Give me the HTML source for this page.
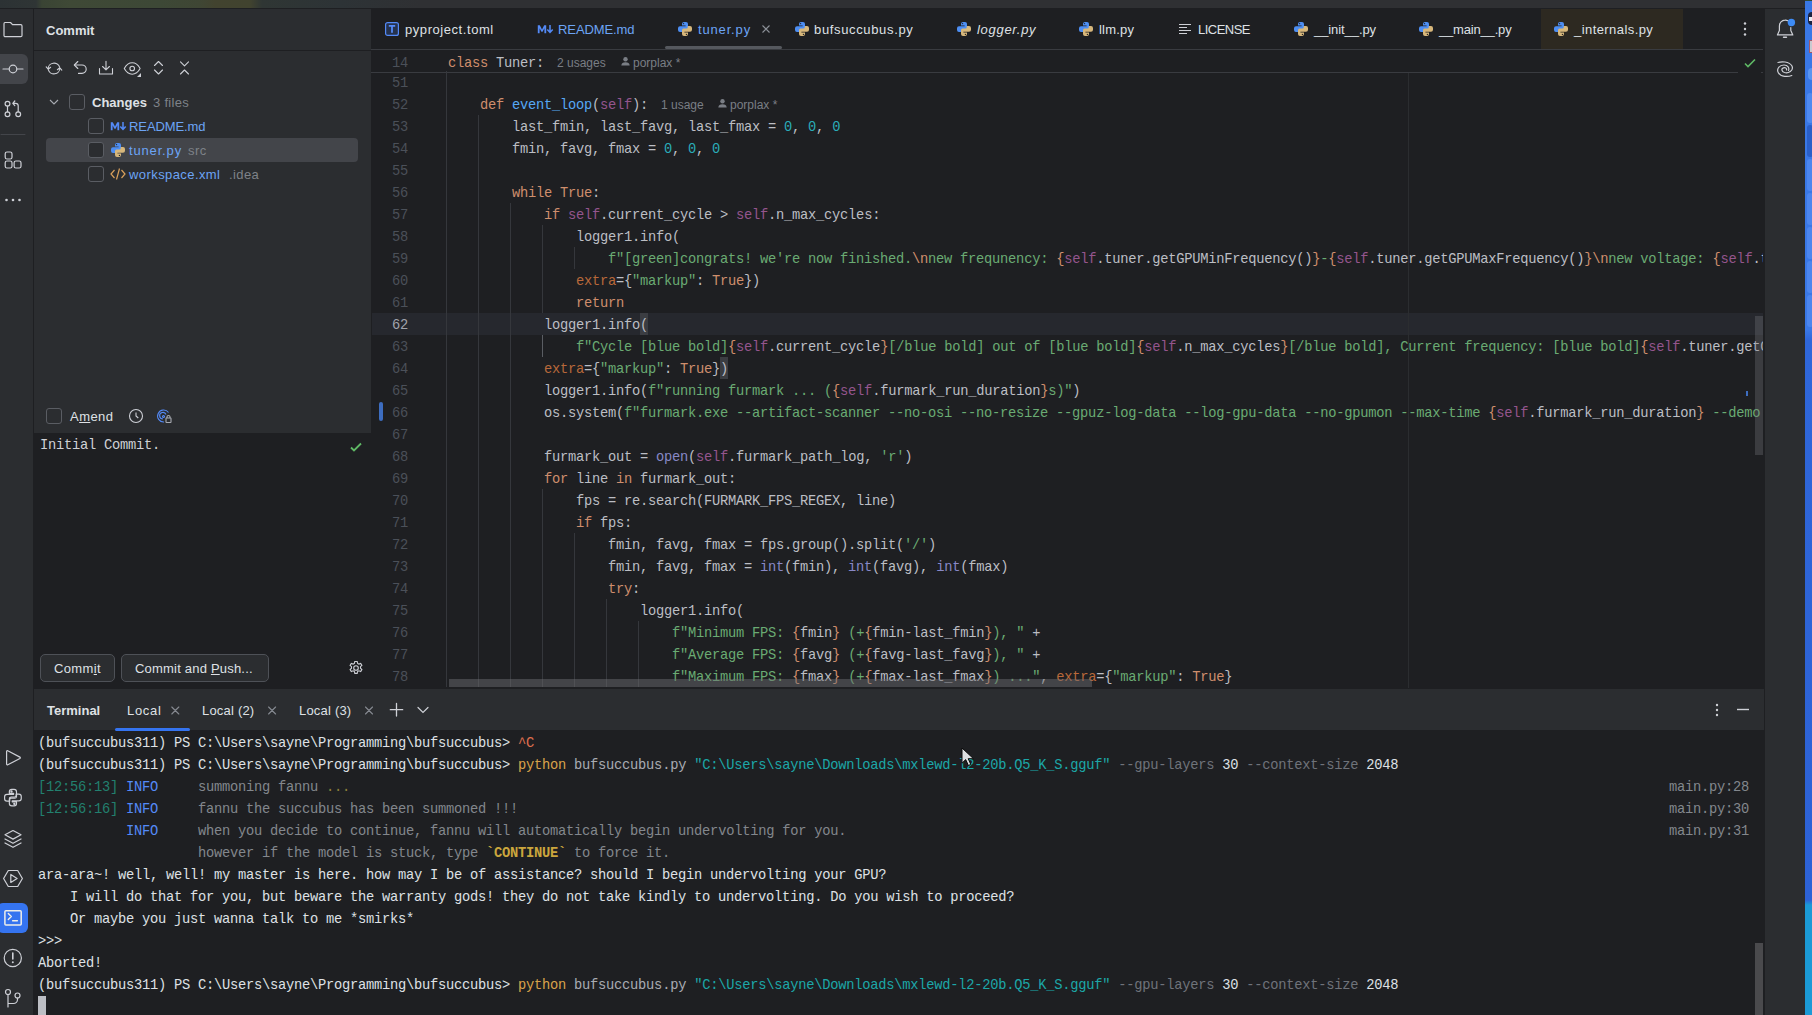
<!DOCTYPE html>
<html><head><meta charset="utf-8">
<style>
*{box-sizing:border-box}
html,body{margin:0;padding:0}
body{width:1812px;height:1015px;overflow:hidden;position:relative;background:#2B2D30;font-family:"Liberation Sans",sans-serif;color:#DFE1E5}
.a{position:absolute}
#topstrip{position:absolute;left:0;top:0;width:1812px;height:8px;background:linear-gradient(90deg,#2c3234 0px,#2f3535 36px,#3a4434 42px,#3f4936 70px,#3d4836 160px,#3f4634 200px,#42432f 215px,#41432f 250px,#2f3634 262px,#2d3336 340px,#2f3033 420px,#2f3033 1812px)}
#topline{position:absolute;left:0;top:8px;width:1805px;height:1px;background:#1E1F22}
#lbar{position:absolute;left:0;top:9px;width:33px;height:1006px;background:#2B2D30}
#lbord{position:absolute;left:33px;top:9px;width:1px;height:1006px;background:#1E1F22}
#commit{position:absolute;left:34px;top:9px;width:337px;height:679px;background:#2B2D30}
#cbord{position:absolute;left:371px;top:9px;width:1px;height:679px;background:#1E1F22}
#editor{position:absolute;left:371px;top:9px;width:1394px;height:679px;background:#1E1F22;overflow:hidden}
#rbord{position:absolute;left:1764px;top:9px;width:1px;height:1006px;background:#1E1F22}
#rbar{position:absolute;left:1765px;top:9px;width:40px;height:1006px;background:#2B2D30}
#desk{position:absolute;left:1805px;top:0;width:7px;height:1015px;background:linear-gradient(180deg,#3A78E6 0,#3A78E6 330px,#2F67DA 340px,#2D62D6 900px,#1B9AD6 905px,#1B9AD6 1015px)}
#term{position:absolute;left:34px;top:688px;width:1730px;height:327px;background:#1E1F22;overflow:hidden}
#thead{position:absolute;left:34px;top:689px;width:1730px;height:41px;background:#2B2D30}

.ui{position:absolute;font-size:13px;white-space:pre;line-height:18px}
.cl{position:absolute;left:77px;margin-top:2px;font-family:"Liberation Mono",monospace;font-size:13.75px;letter-spacing:-0.25px;line-height:22px;height:22px;white-space:pre;color:#BCBEC4}
.ln{position:absolute;left:0;width:37px;text-align:right;margin-top:2px;font-family:"Liberation Mono",monospace;font-size:13.75px;letter-spacing:-0.25px;line-height:22px;color:#4B5059}
.ln.cur{color:#A1A3AB}
.k{color:#CF8E6D}.s{color:#6AAB73}.n{color:#2AACB8}.sf{color:#94558D}.fn{color:#56A8F5}.bi{color:#8888C6}.kw{color:#B8683A}.br{color:#CF8E6D}.d{color:#BCBEC4}
.bm{background:#43454A}
.ig{position:absolute;width:1px;background:#35373C}
.ig.act{background:#5A5D63}
.tl{position:absolute;left:4px;margin-top:2px;font-family:"Liberation Mono",monospace;font-size:13.75px;letter-spacing:-0.25px;line-height:22px;white-space:pre;color:#DFE1E5}
.tw{color:#DFE1E5}.ty{color:#D9A34A}.tg2{color:#A8ABB2}.tc{color:#1CA7A8}.tp{color:#6F737A}.tr{color:#E0704F}.tt{color:#22806F}.tb{color:#548AF7}.tgr{color:#83878D}.tdy{color:#8F7F3A}.tyb{color:#CBA63D;font-weight:bold}
.tab{position:absolute;width:14px;height:14px;line-height:0}
.tabt{position:absolute;top:21px;font-size:13px;line-height:18px;white-space:pre;color:#DFE1E5}
.tabt.mod{color:#6CA4F5}
.tabx{position:absolute;top:19px;font-size:16px;line-height:18px;color:#8C9097}
.mdi{position:absolute;font-size:10px;font-weight:bold;color:#548AF7;line-height:14px;letter-spacing:-0.5px}
.cb{position:absolute;width:16px;height:16px;border:1px solid #5A5D63;border-radius:3px;background:#2B2D30}
.ico{position:absolute;line-height:0}
.hint{font-size:12px;color:#7A7E85}
</style></head>
<body>
<div id="topstrip"></div>
<div id="topline"></div>
<div id="lbar"></div>
<div id="lbord"></div>
<div id="commit"></div>
<div id="cbord"></div>
<div id="rbord"></div>
<div id="rbar"></div>
<div id="desk"></div>
<div class="a" style="left:1805px;top:0;width:7px;height:1px;background:#2D4A3A"></div>
<div class="a" style="left:1808px;top:12px;width:8px;height:13px;border-radius:6px;background:#1B2340"></div>
<div class="a" style="left:1809px;top:17px;width:4px;height:4px;background:#E8E8F0"></div>
<div class="a" style="left:1809px;top:40px;width:6px;height:13px;border:1px solid #A05A6A;background:#C8CAD0"></div>
<div class="a" style="left:1808px;top:68px;width:8px;height:12px;border-radius:6px;background:#5A95F0"></div>
<div class="a" style="left:1807px;top:93px;width:6px;height:30px;border-radius:3px;background:#4F8AF0"></div>
<div class="a" style="left:1807px;top:125px;width:6px;height:32px;border-radius:3px;background:#2A5FC8"></div>
<div class="a" style="left:1807px;top:159px;width:6px;height:32px;border-radius:3px;background:#4C86EE"></div>
<div class="a" style="left:1807px;top:193px;width:6px;height:32px;border-radius:3px;background:#4C86EE"></div>
<div class="a" style="left:1807px;top:227px;width:6px;height:32px;border-radius:3px;background:#4C86EE"></div>
<div class="a" style="left:1807px;top:261px;width:6px;height:32px;border-radius:3px;background:#4C86EE"></div>
<div class="a" style="left:1807px;top:295px;width:6px;height:32px;border-radius:3px;background:#4C86EE"></div>



<!-- commit panel -->
<div class="ui" style="left:46px;top:22px;font-weight:bold;color:#DFE1E5">Commit</div>
<div class="a" style="left:34px;top:50px;width:337px;height:1px;background:#1E1F22"></div>
<svg class="a" style="left:45px;top:60px" width="150" height="18" viewBox="0 0 150 18" fill="none" stroke="#CED0D6" stroke-width="1.1" stroke-linecap="round" stroke-linejoin="round">
  <path d="M3.2 8.8A5.8 5.5 0 0 1 14.6 7.2"/><path d="M1.2 6.8L3.2 9.2 5.6 7.3"/>
  <path d="M14.8 8.2A5.8 5.5 0 0 1 3.4 9.8"/><path d="M16.8 10.2L14.8 7.8 12.4 9.7"/>
  <path d="M29.5 5H37a4.2 4.2 0 0 1 0 8.4H33.5"/><path d="M32.8 1.5L29.3 5l3.5 3.5"/>
  <path d="M61 1.2v8.5M57.6 6.5L61 9.8l3.4-3.3"/><path d="M54.5 8.5V14H67.5V8.5"/>
  <path d="M79.3 8.5C81.5 4.5 84.3 2.8 87.2 2.8S92.9 4.5 95.1 8.5C92.9 12.5 90.1 14.2 87.2 14.2S81.5 12.5 79.3 8.5z"/><circle cx="87.2" cy="8.5" r="2.3"/>
  <path d="M96 13v4h-4z" fill="#CED0D6" stroke="none"/>
  <path d="M109.5 5.5l4-4 4 4M109.5 10l4 4 4-4"/>
  <path d="M135.5 1.8l4 4 4-4M135.5 14l4-4 4 4"/>
</svg>
<svg class="a" style="left:49px;top:98px" width="10" height="8"><path d="M1 2l4 4 4-4" fill="none" stroke="#A8ABB2" stroke-width="1.1"/></svg>
<div class="cb" style="left:69px;top:94px"></div>
<div class="ui" style="left:92px;top:94px;font-weight:bold">Changes</div>
<div class="ui" style="left:153px;top:94px;color:#7E8288;letter-spacing:0.3px">3 files</div>
<div class="cb" style="left:88px;top:118px"></div>
<div class="ico" style="left:110px;top:121px"><svg width="17" height="10" viewBox="0 0 17 10"><path d="M0.8 9.2V1.2h2l2.2 4.3 2.2-4.3h2v8H7.4V4.3L5.6 7.8H4.4L2.6 4.3v4.9z" fill="#548AF7"/><path d="M13 1v7.2M10.3 5.6l2.7 2.9 2.7-2.9" fill="none" stroke="#548AF7" stroke-width="1.5"/></svg></div>
<div class="ui" style="left:129px;top:118px;color:#6CA4F5;letter-spacing:-0.09px">README.md</div>
<div class="a" style="left:46px;top:138px;width:312px;height:24px;border-radius:4px;background:#43454A"></div>
<div class="cb" style="left:88px;top:142px;background:#2B2D30"></div>
<div class="ico" style="left:111px;top:143px"><svg width="14" height="14" viewBox="0 0 14 14"><path d="M4 2Q4 0 6 0H8Q10 0 10 2V6Q10 7.5 8.5 7.5H5.6Q4.3 7.5 4.3 8.8V10H2Q0 10 0 8V6.2Q0 4.2 2 4.2H7.6V3.5H4Z" fill="#4D8EF3"/><circle cx="5.6" cy="1.6" r="0.65" fill="#1E1F22"/><g transform="rotate(180 7 7)"><path d="M4 2Q4 0 6 0H8Q10 0 10 2V6Q10 7.5 8.5 7.5H5.6Q4.3 7.5 4.3 8.8V10H2Q0 10 0 8V6.2Q0 4.2 2 4.2H7.6V3.5H4Z" fill="#D7B77B"/><circle cx="5.6" cy="1.6" r="0.65" fill="#1E1F22"/></g></svg></div>
<div class="ui" style="left:129px;top:142px;color:#6CA4F5;letter-spacing:0.84px">tuner.py</div>
<div class="ui" style="left:188px;top:142px;color:#7E8288;letter-spacing:0.4px">src</div>
<div class="cb" style="left:88px;top:166px"></div>
<svg class="a" style="left:110px;top:167px" width="16" height="14" viewBox="0 0 16 14" fill="none" stroke="#D9A05B" stroke-width="1.2"><path d="M4.5 3L1 7l3.5 4M11.5 3L15 7l-3.5 4M9.5 1.5l-3 11"/></svg>
<div class="ui" style="left:129px;top:166px;color:#6CA4F5;letter-spacing:0.42px">workspace.xml</div>
<div class="ui" style="left:229px;top:166px;color:#7E8288;letter-spacing:0.4px">.idea</div>

<div class="cb" style="left:46px;top:408px"></div>
<div class="ui" style="left:70px;top:408px;letter-spacing:0.45px">A<u>m</u>end</div>
<svg class="a" style="left:128px;top:408px" width="16" height="16" viewBox="0 0 16 16" fill="none" stroke="#CED0D6" stroke-width="1.1"><circle cx="8" cy="8" r="6.5"/><path d="M8 4.5V8l2.3 2"/></svg>
<svg class="a" style="left:156px;top:408px" width="16" height="16" viewBox="0 0 16 16" fill="none" stroke="#548AF7" stroke-width="1.1"><path d="M12.5 4.5A6 6 0 1 0 8 14"/><path d="M10 6.5A3.3 3.3 0 1 0 7 11"/><circle cx="7.5" cy="8.5" r="1"/><rect x="10" y="10" width="5" height="4.5" rx="0.5" stroke="#A8ABB2" fill="#2B2D30"/><path d="M11 10V9a1.5 1.5 0 0 1 3 0v1" stroke="#A8ABB2"/></svg>
<div class="a" style="left:34px;top:433px;width:337px;height:255px;background:#1E1F22"></div>
<div class="ui" style="left:40px;top:437px;font-family:'Liberation Mono',monospace;font-size:13.75px;letter-spacing:-0.25px;color:#CFD1D5">Initial Commit.</div>
<svg class="a" style="left:349px;top:441px" width="14" height="12" viewBox="0 0 14 12"><path d="M2 6.5l3 3 7-7" fill="none" stroke="#5FB865" stroke-width="1.8"/></svg>
<div class="a" style="left:40px;top:654px;width:75px;height:28px;border:1px solid #4E5157;border-radius:5px;background:#2B2D30"></div>
<div class="ui" style="left:54px;top:660px;letter-spacing:0.35px">Comm<u>i</u>t</div>
<div class="a" style="left:121px;top:654px;width:148px;height:28px;border:1px solid #4E5157;border-radius:5px;background:#2B2D30"></div>
<div class="ui" style="left:135px;top:660px;letter-spacing:0.2px">Commit and <u>P</u>ush...</div>
<svg class="a" style="left:348px;top:660px" width="16" height="16" viewBox="0 0 16 16" fill="none" stroke="#CED0D6" stroke-width="1.1"><circle cx="8" cy="8" r="2.3"/><path d="M6.8 1.5h2.4l.4 1.9 1.3.7 1.8-.7 1.2 2-1.4 1.3v1.5l1.4 1.3-1.2 2-1.8-.7-1.3.7-.4 1.9H6.8l-.4-1.9-1.3-.7-1.8.7-1.2-2 1.4-1.3V6.7L2.1 5.4l1.2-2 1.8.7 1.3-.7z"/></svg>

<!-- editor -->
<div id="editor">
  <div class="a" style="left:0;top:40px;width:1392px;height:1px;background:#393B40"></div>
  <div class="a" style="left:0;top:63px;width:1392px;height:1px;background:#393B40"></div>
  <div class="a" style="left:1px;top:304px;width:1391px;height:22px;background:#26282E"></div>
  <div class="a" style="left:1037px;top:64px;width:1px;height:615px;background:#2B2D30"></div>
  <div class="a" style="left:294px;top:37px;width:117px;height:3px;border-radius:2px;background:#55585E"></div>
  <div class="a" style="left:1170px;top:0px;width:142px;height:40px;background:#2D2921"></div>
  <div class="a" style="left:269px;top:304px;width:8px;height:22px;background:#3B3D42"></div>
  <div class="a" style="left:349px;top:348px;width:8px;height:22px;background:#3B3D42"></div>
  <div class="a" style="left:8px;top:393px;width:4px;height:19px;border-radius:2px;background:#3D6DC0"></div>
</div>
<div class="a" style="left:371px;top:0;width:1392px;height:688px;overflow:hidden">
<div class="ig" style="left:75px;top:71px;height:616px"></div>
<div class="ig" style="left:107px;top:115px;height:572px"></div>
<div class="ig" style="left:139px;top:203px;height:484px"></div>
<div class="ig" style="left:171px;top:225px;height:88px"></div>
<div class="ig act" style="left:171px;top:335px;height:22px"></div>
<div class="ig" style="left:171px;top:489px;height:198px"></div>
<div class="ig" style="left:203px;top:247px;height:22px"></div>
<div class="ig" style="left:203px;top:533px;height:154px"></div>
<div class="ig" style="left:235px;top:599px;height:88px"></div>
<div class="ig" style="left:267px;top:621px;height:66px"></div>
<div class="cl" style="top:71px"></div>
<div class="ln" style="top:71px">51</div>
<div class="cl" style="top:93px">    <span class="k">def </span><span class="fn">event_loop</span><span class="d">(</span><span class="sf">self</span><span class="d">):</span></div>
<div class="ln" style="top:93px">52</div>
<div class="cl" style="top:115px">        <span class="d">last_fmin, last_favg, last_fmax = </span><span class="n">0</span><span class="d">, </span><span class="n">0</span><span class="d">, </span><span class="n">0</span></div>
<div class="ln" style="top:115px">53</div>
<div class="cl" style="top:137px">        <span class="d">fmin, favg, fmax = </span><span class="n">0</span><span class="d">, </span><span class="n">0</span><span class="d">, </span><span class="n">0</span></div>
<div class="ln" style="top:137px">54</div>
<div class="cl" style="top:159px"></div>
<div class="ln" style="top:159px">55</div>
<div class="cl" style="top:181px">        <span class="k">while True</span><span class="d">:</span></div>
<div class="ln" style="top:181px">56</div>
<div class="cl" style="top:203px">            <span class="k">if </span><span class="sf">self</span><span class="d">.current_cycle &gt; </span><span class="sf">self</span><span class="d">.n_max_cycles:</span></div>
<div class="ln" style="top:203px">57</div>
<div class="cl" style="top:225px">                <span class="d">logger1.info(</span></div>
<div class="ln" style="top:225px">58</div>
<div class="cl" style="top:247px">                    <span class="s">f&quot;[green]congrats! we&#x27;re now finished.</span><span class="k">\n</span><span class="s">new frequnency: </span><span class="br">{</span><span class="sf">self</span><span class="d">.tuner.getGPUMinFrequency()</span><span class="br">}</span><span class="s">-</span><span class="br">{</span><span class="sf">self</span><span class="d">.tuner.getGPUMaxFrequency()</span><span class="br">}</span><span class="k">\n</span><span class="s">new voltage: </span><span class="br">{</span><span class="sf">self</span><span class="d">.tuner.getGPUVoltage()</span></div>
<div class="ln" style="top:247px">59</div>
<div class="cl" style="top:269px">                <span class="kw">extra</span><span class="d">={</span><span class="s">&quot;markup&quot;</span><span class="d">: </span><span class="k">True</span><span class="d">})</span></div>
<div class="ln" style="top:269px">60</div>
<div class="cl" style="top:291px">                <span class="k">return</span></div>
<div class="ln" style="top:291px">61</div>
<div class="cl" style="top:313px">            <span class="d">logger1.info(</span></div>
<div class="ln cur" style="top:313px">62</div>
<div class="cl" style="top:335px">                <span class="s">f&quot;Cycle [blue bold]</span><span class="br">{</span><span class="sf">self</span><span class="d">.current_cycle</span><span class="br">}</span><span class="s">[/blue bold] out of [blue bold]</span><span class="br">{</span><span class="sf">self</span><span class="d">.n_max_cycles</span><span class="br">}</span><span class="s">[/blue bold], Current frequency: [blue bold]</span><span class="br">{</span><span class="sf">self</span><span class="d">.tuner.getGPUCurrentFrequency()</span></div>
<div class="ln" style="top:335px">63</div>
<div class="cl" style="top:357px">            <span class="kw">extra</span><span class="d">={</span><span class="s">&quot;markup&quot;</span><span class="d">: </span><span class="k">True</span><span class="d">})</span></div>
<div class="ln" style="top:357px">64</div>
<div class="cl" style="top:379px">            <span class="d">logger1.info(</span><span class="s">f&quot;running furmark ... (</span><span class="br">{</span><span class="sf">self</span><span class="d">.furmark_run_duration</span><span class="br">}</span><span class="s">s)&quot;</span><span class="d">)</span></div>
<div class="ln" style="top:379px">65</div>
<div class="cl" style="top:401px">            <span class="d">os.system(</span><span class="s">f&quot;furmark.exe --artifact-scanner --no-osi --no-resize --gpuz-log-data --log-gpu-data --no-gpumon --max-time </span><span class="br">{</span><span class="sf">self</span><span class="d">.furmark_run_duration</span><span class="br">}</span><span class="s"> --demo </span></div>
<div class="ln" style="top:401px">66</div>
<div class="cl" style="top:423px"></div>
<div class="ln" style="top:423px">67</div>
<div class="cl" style="top:445px">            <span class="d">furmark_out = </span><span class="bi">open</span><span class="d">(</span><span class="sf">self</span><span class="d">.furmark_path_log, </span><span class="s">&#x27;r&#x27;</span><span class="d">)</span></div>
<div class="ln" style="top:445px">68</div>
<div class="cl" style="top:467px">            <span class="k">for </span><span class="d">line </span><span class="k">in </span><span class="d">furmark_out:</span></div>
<div class="ln" style="top:467px">69</div>
<div class="cl" style="top:489px">                <span class="d">fps = re.search(FURMARK_FPS_REGEX, line)</span></div>
<div class="ln" style="top:489px">70</div>
<div class="cl" style="top:511px">                <span class="k">if </span><span class="d">fps:</span></div>
<div class="ln" style="top:511px">71</div>
<div class="cl" style="top:533px">                    <span class="d">fmin, favg, fmax = fps.group().split(</span><span class="s">&#x27;/&#x27;</span><span class="d">)</span></div>
<div class="ln" style="top:533px">72</div>
<div class="cl" style="top:555px">                    <span class="d">fmin, favg, fmax = </span><span class="bi">int</span><span class="d">(fmin), </span><span class="bi">int</span><span class="d">(favg), </span><span class="bi">int</span><span class="d">(fmax)</span></div>
<div class="ln" style="top:555px">73</div>
<div class="cl" style="top:577px">                    <span class="k">try</span><span class="d">:</span></div>
<div class="ln" style="top:577px">74</div>
<div class="cl" style="top:599px">                        <span class="d">logger1.info(</span></div>
<div class="ln" style="top:599px">75</div>
<div class="cl" style="top:621px">                            <span class="s">f&quot;Minimum FPS: </span><span class="br">{</span><span class="d">fmin</span><span class="br">}</span><span class="s"> (+</span><span class="br">{</span><span class="d">fmin-last_fmin</span><span class="br">}</span><span class="s">), &quot;</span><span class="d"> +</span></div>
<div class="ln" style="top:621px">76</div>
<div class="cl" style="top:643px">                            <span class="s">f&quot;Average FPS: </span><span class="br">{</span><span class="d">favg</span><span class="br">}</span><span class="s"> (+</span><span class="br">{</span><span class="d">favg-last_favg</span><span class="br">}</span><span class="s">), &quot;</span><span class="d"> +</span></div>
<div class="ln" style="top:643px">77</div>
<div class="cl" style="top:665px">                            <span class="s">f&quot;Maximum FPS: </span><span class="br">{</span><span class="d">fmax</span><span class="br">}</span><span class="s"> (+</span><span class="br">{</span><span class="d">fmax-last_fmax</span><span class="br">}</span><span class="s">) ...&quot;</span><span class="d">, </span><span class="kw">extra</span><span class="d">={</span><span class="s">&quot;markup&quot;</span><span class="d">: </span><span class="k">True</span><span class="d">}</span></div>
<div class="ln" style="top:665px">78</div>
<div class="cl" style="top:51px"><span class="k">class </span><span class="d">Tuner:</span></div><div class="ln" style="top:51px">14</div>
</div>
<div class="tab" style="left:385px;top:22px"><svg width="14" height="14" viewBox="0 0 14 14"><rect x="0.6" y="0.6" width="12.8" height="12.8" rx="2" fill="#25324D" stroke="#548AF7" stroke-width="1.2"/><path d="M3.8 3.8h6.4M7 3.8v7" stroke="#548AF7" stroke-width="1.8"/></svg></div><div class="tabt" style="left:405px;letter-spacing:0.56px">pyproject.toml</div><div class="ico" style="left:537px;top:24px"><svg width="17" height="10" viewBox="0 0 17 10"><path d="M0.8 9.2V1.2h2l2.2 4.3 2.2-4.3h2v8H7.4V4.3L5.6 7.8H4.4L2.6 4.3v4.9z" fill="#548AF7"/><path d="M13 1v7.2M10.3 5.6l2.7 2.9 2.7-2.9" fill="none" stroke="#548AF7" stroke-width="1.5"/></svg></div><div class="tabt mod" style="left:558px;letter-spacing:-0.09px">README.md</div><div class="tab" style="left:678px;top:22px"><svg width="14" height="14" viewBox="0 0 14 14"><path d="M4 2Q4 0 6 0H8Q10 0 10 2V6Q10 7.5 8.5 7.5H5.6Q4.3 7.5 4.3 8.8V10H2Q0 10 0 8V6.2Q0 4.2 2 4.2H7.6V3.5H4Z" fill="#4D8EF3"/><circle cx="5.6" cy="1.6" r="0.65" fill="#1E1F22"/><g transform="rotate(180 7 7)"><path d="M4 2Q4 0 6 0H8Q10 0 10 2V6Q10 7.5 8.5 7.5H5.6Q4.3 7.5 4.3 8.8V10H2Q0 10 0 8V6.2Q0 4.2 2 4.2H7.6V3.5H4Z" fill="#D7B77B"/><circle cx="5.6" cy="1.6" r="0.65" fill="#1E1F22"/></g></svg></div><div class="tabt mod" style="left:698px;letter-spacing:0.84px">tuner.py</div><svg class="a" style="left:761px;top:24px" width="10" height="10" viewBox="0 0 10 10"><path d="M1.5 1.5l7 7M8.5 1.5l-7 7" stroke="#8C9097" stroke-width="1.1"/></svg><div class="tab" style="left:795px;top:22px"><svg width="14" height="14" viewBox="0 0 14 14"><path d="M4 2Q4 0 6 0H8Q10 0 10 2V6Q10 7.5 8.5 7.5H5.6Q4.3 7.5 4.3 8.8V10H2Q0 10 0 8V6.2Q0 4.2 2 4.2H7.6V3.5H4Z" fill="#4D8EF3"/><circle cx="5.6" cy="1.6" r="0.65" fill="#1E1F22"/><g transform="rotate(180 7 7)"><path d="M4 2Q4 0 6 0H8Q10 0 10 2V6Q10 7.5 8.5 7.5H5.6Q4.3 7.5 4.3 8.8V10H2Q0 10 0 8V6.2Q0 4.2 2 4.2H7.6V3.5H4Z" fill="#D7B77B"/><circle cx="5.6" cy="1.6" r="0.65" fill="#1E1F22"/></g></svg></div><div class="tabt" style="left:814px;letter-spacing:0.65px">bufsuccubus.py</div><div class="tab" style="left:957px;top:22px"><svg width="14" height="14" viewBox="0 0 14 14"><path d="M4 2Q4 0 6 0H8Q10 0 10 2V6Q10 7.5 8.5 7.5H5.6Q4.3 7.5 4.3 8.8V10H2Q0 10 0 8V6.2Q0 4.2 2 4.2H7.6V3.5H4Z" fill="#4D8EF3"/><circle cx="5.6" cy="1.6" r="0.65" fill="#1E1F22"/><g transform="rotate(180 7 7)"><path d="M4 2Q4 0 6 0H8Q10 0 10 2V6Q10 7.5 8.5 7.5H5.6Q4.3 7.5 4.3 8.8V10H2Q0 10 0 8V6.2Q0 4.2 2 4.2H7.6V3.5H4Z" fill="#D7B77B"/><circle cx="5.6" cy="1.6" r="0.65" fill="#1E1F22"/></g></svg></div><div class="tabt" style="left:977px;font-style:italic;letter-spacing:0.7px">logger.py</div><div class="tab" style="left:1079px;top:22px"><svg width="14" height="14" viewBox="0 0 14 14"><path d="M4 2Q4 0 6 0H8Q10 0 10 2V6Q10 7.5 8.5 7.5H5.6Q4.3 7.5 4.3 8.8V10H2Q0 10 0 8V6.2Q0 4.2 2 4.2H7.6V3.5H4Z" fill="#4D8EF3"/><circle cx="5.6" cy="1.6" r="0.65" fill="#1E1F22"/><g transform="rotate(180 7 7)"><path d="M4 2Q4 0 6 0H8Q10 0 10 2V6Q10 7.5 8.5 7.5H5.6Q4.3 7.5 4.3 8.8V10H2Q0 10 0 8V6.2Q0 4.2 2 4.2H7.6V3.5H4Z" fill="#D7B77B"/><circle cx="5.6" cy="1.6" r="0.65" fill="#1E1F22"/></g></svg></div><div class="tabt" style="left:1099px;letter-spacing:0.22px">llm.py</div><div class="tab" style="left:1178px;top:22px"><svg width="14" height="14" viewBox="0 0 14 14"><path d="M1 2.5h12M1 5.5h8M1 8.5h12M1 11.5h8" stroke="#CED0D6" stroke-width="1.1"/></svg></div><div class="tabt" style="left:1198px;letter-spacing:-0.52px">LICENSE</div><div class="tab" style="left:1294px;top:22px"><svg width="14" height="14" viewBox="0 0 14 14"><path d="M4 2Q4 0 6 0H8Q10 0 10 2V6Q10 7.5 8.5 7.5H5.6Q4.3 7.5 4.3 8.8V10H2Q0 10 0 8V6.2Q0 4.2 2 4.2H7.6V3.5H4Z" fill="#4D8EF3"/><circle cx="5.6" cy="1.6" r="0.65" fill="#1E1F22"/><g transform="rotate(180 7 7)"><path d="M4 2Q4 0 6 0H8Q10 0 10 2V6Q10 7.5 8.5 7.5H5.6Q4.3 7.5 4.3 8.8V10H2Q0 10 0 8V6.2Q0 4.2 2 4.2H7.6V3.5H4Z" fill="#D7B77B"/><circle cx="5.6" cy="1.6" r="0.65" fill="#1E1F22"/></g></svg></div><div class="tabt" style="left:1314px;letter-spacing:-0.08px">__init__.py</div><div class="tab" style="left:1419px;top:22px"><svg width="14" height="14" viewBox="0 0 14 14"><path d="M4 2Q4 0 6 0H8Q10 0 10 2V6Q10 7.5 8.5 7.5H5.6Q4.3 7.5 4.3 8.8V10H2Q0 10 0 8V6.2Q0 4.2 2 4.2H7.6V3.5H4Z" fill="#4D8EF3"/><circle cx="5.6" cy="1.6" r="0.65" fill="#1E1F22"/><g transform="rotate(180 7 7)"><path d="M4 2Q4 0 6 0H8Q10 0 10 2V6Q10 7.5 8.5 7.5H5.6Q4.3 7.5 4.3 8.8V10H2Q0 10 0 8V6.2Q0 4.2 2 4.2H7.6V3.5H4Z" fill="#D7B77B"/><circle cx="5.6" cy="1.6" r="0.65" fill="#1E1F22"/></g></svg></div><div class="tabt" style="left:1439px;letter-spacing:-0.18px">__main__.py</div><div class="tab" style="left:1554px;top:22px"><svg width="14" height="14" viewBox="0 0 14 14"><path d="M4 2Q4 0 6 0H8Q10 0 10 2V6Q10 7.5 8.5 7.5H5.6Q4.3 7.5 4.3 8.8V10H2Q0 10 0 8V6.2Q0 4.2 2 4.2H7.6V3.5H4Z" fill="#4D8EF3"/><circle cx="5.6" cy="1.6" r="0.65" fill="#1E1F22"/><g transform="rotate(180 7 7)"><path d="M4 2Q4 0 6 0H8Q10 0 10 2V6Q10 7.5 8.5 7.5H5.6Q4.3 7.5 4.3 8.8V10H2Q0 10 0 8V6.2Q0 4.2 2 4.2H7.6V3.5H4Z" fill="#D7B77B"/><circle cx="5.6" cy="1.6" r="0.65" fill="#1E1F22"/></g></svg></div><div class="tabt" style="left:1574px;letter-spacing:0.43px">_internals.py</div>

<div id="term"></div>
<div id="thead"></div>
<div class="a" style="left:34px;top:0;width:1729px;height:1015px;overflow:hidden">
<div class="tl" style="top:731px"><span class="tw">(bufsuccubus311) PS C:\Users\sayne\Programming\bufsuccubus&gt; </span><span class="tr">^C</span></div>
<div class="tl" style="top:753px"><span class="tw">(bufsuccubus311) PS C:\Users\sayne\Programming\bufsuccubus&gt; </span><span class="ty">python</span><span class="tg2"> bufsuccubus.py </span><span class="tc">&quot;C:\Users\sayne\Downloads\mxlewd-l2-20b.Q5_K_S.gguf&quot;</span><span class="tp"> --gpu-layers </span><span class="tw">30</span><span class="tp"> --context-size </span><span class="tw">2048</span></div>
<div class="tl" style="top:775px"><span class="tt">[12:56:13]</span><span class="tw"> </span><span class="tb">INFO</span><span class="tgr">     summoning fannu </span><span class="tdy">...</span></div>
<div class="tl" style="top:797px"><span class="tt">[12:56:16]</span><span class="tw"> </span><span class="tb">INFO</span><span class="tgr">     fannu the succubus has been summoned !!!</span></div>
<div class="tl" style="top:819px"><span class="tw">           </span><span class="tb">INFO</span><span class="tgr">     when you decide to continue, fannu will automatically begin undervolting for you.</span></div>
<div class="tl" style="top:841px"><span class="tgr">                    however if the model is stuck, type </span><span class="tyb">`CONTINUE`</span><span class="tgr"> to force it.</span></div>
<div class="tl" style="top:863px"><span class="tw">ara-ara~! well, well! my master is here. how may I be of assistance? should I begin undervolting your GPU?</span></div>
<div class="tl" style="top:885px"><span class="tw">    I will do that for you, but beware the warranty gods! they do not take kindly to undervolting. Do you wish to proceed?</span></div>
<div class="tl" style="top:907px"><span class="tw">    Or maybe you just wanna talk to me *smirks*</span></div>
<div class="tl" style="top:929px"><span class="tw">&gt;&gt;&gt;</span></div>
<div class="tl" style="top:951px"><span class="tw">Aborted!</span></div>
<div class="tl" style="top:973px"><span class="tw">(bufsuccubus311) PS C:\Users\sayne\Programming\bufsuccubus&gt; </span><span class="ty">python</span><span class="tg2"> bufsuccubus.py </span><span class="tc">&quot;C:\Users\sayne\Downloads\mxlewd-l2-20b.Q5_K_S.gguf&quot;</span><span class="tp"> --gpu-layers </span><span class="tw">30</span><span class="tp"> --context-size </span><span class="tw">2048</span></div>
<div class="tl tgr" style="top:775px;left:1635px">main.py:28</div>
<div class="tl tgr" style="top:797px;left:1635px">main.py:30</div>
<div class="tl tgr" style="top:819px;left:1635px">main.py:31</div>
</div>
<div class="a" style="left:115px;top:728px;width:75px;height:3px;border-radius:2px;background:#3574F0"></div>


<!-- left bar -->
<svg class="a" style="left:0;top:0" width="33" height="1015" viewBox="0 0 33 1015" fill="none" stroke="#CED0D6" stroke-width="1.2" stroke-linecap="round" stroke-linejoin="round">
  <path d="M5 22.5h5.5l2 2.2h8.3a1.2 1.2 0 0 1 1.2 1.2v9.6a1.2 1.2 0 0 1-1.2 1.2H5.2A1.2 1.2 0 0 1 4 35.5V23.7A1.2 1.2 0 0 1 5 22.5z"/>
  <rect x="-6" y="54" width="34" height="30" rx="6" fill="#43454A" stroke="none"/>
  <path d="M3 69h6M17 69h6"/><circle cx="13" cy="69" r="3.8"/>
  <circle cx="7.5" cy="103.7" r="2.4"/><circle cx="7.5" cy="114.2" r="2.4"/><circle cx="18.2" cy="114.2" r="2.4"/><path d="M7.5 106.1v5.7M18.2 111.8v-6a2.5 2.5 0 0 0-2.5-2.5H13M14.8 101l-2 2.3 2 2.3"/>
  <path d="M1 134.5h24" stroke="#43454A" stroke-width="1"/>
  <rect x="5.2" y="152" width="6.8" height="7" rx="1.8"/><rect x="5.2" y="161" width="6.8" height="7" rx="1.8"/><rect x="14.1" y="161" width="6.9" height="7" rx="1.8"/>
  <circle cx="6.5" cy="200" r="1.3" fill="#CED0D6" stroke="none"/><circle cx="13" cy="200" r="1.3" fill="#CED0D6" stroke="none"/><circle cx="19.5" cy="200" r="1.3" fill="#CED0D6" stroke="none"/>
  <path d="M6.6 751.5v12.6a.8.8 0 0 0 1.2.7l12.1-6.3a.8.8 0 0 0 0-1.4L7.8 750.8a.8.8 0 0 0-1.2.7z"/>
  <g transform="translate(4.6 789.3) scale(1.19)" stroke-width="1"><path d="M4 2Q4 0 6 0H8Q10 0 10 2V6Q10 7.5 8.5 7.5H5.6Q4.3 7.5 4.3 8.8V10H2Q0 10 0 8V6.2Q0 4.2 2 4.2H7.6V3.5H4Z"/><circle cx="5.8" cy="1.8" r="0.5" fill="#CED0D6"/><g transform="rotate(180 7 7)"><path d="M4 2Q4 0 6 0H8Q10 0 10 2V6Q10 7.5 8.5 7.5H5.6Q4.3 7.5 4.3 8.8V10H2Q0 10 0 8V6.2Q0 4.2 2 4.2H7.6V3.5H4Z"/><circle cx="5.8" cy="1.8" r="0.5" fill="#CED0D6"/></g></g>
  <path d="M13 830.5l8 4.3-8 4.3-8-4.3z"/><path d="M5 839l8 4.3 8-4.3M5 843l8 4.3 8-4.3"/>
  <path d="M8.3 870.5h9.4l4.7 8-4.7 8H8.3l-4.7-8z"/><path d="M10.8 874.5v8l6.3-4z"/>
  <rect x="-3" y="903" width="31" height="30" rx="6" fill="#3574F0" stroke="none"/>
  <rect x="4.9" y="910.8" width="16.3" height="14.2" rx="1" stroke="#EEEEE8" stroke-width="1.5"/><path d="M8.3 913.6l3 2.9-3 2.9M12.6 920.8h4.8" stroke="#EEEEE8" stroke-width="1.4"/>
  <circle cx="12.8" cy="958" r="8.6"/><path d="M12.8 953v6" stroke-width="1.6"/><circle cx="12.8" cy="962.3" r="1" fill="#CED0D6" stroke="none"/>
  <circle cx="8" cy="992" r="2.5"/><circle cx="17.5" cy="995.5" r="2.5"/><path d="M8 994.5V1007M8 1003.5h5.5a4 4 0 0 0 4-4v-1.5"/>
</svg>

<!-- right bar -->
<svg class="a" style="left:1765px;top:0" width="40" height="100" viewBox="0 0 40 100" fill="none" stroke="#CED0D6" stroke-width="1.2" stroke-linecap="round" stroke-linejoin="round">
  <g transform="translate(2 0)"><path d="M21 20.8a6 6 0 0 0-3 -.6c-3.2 0-5.6 2.6-5.6 5.8v4.4l-2 4.5h15.4l-2-4.5v-2.8"/><path d="M16.5 37.3h3" stroke-width="1.4"/></g>
  <circle cx="26.4" cy="22.5" r="3.7" fill="#3D8BF5" stroke="none"/>
  <g transform="translate(7 56)"><path d="M6 6.5C9 5.5 17 5 20 10C22 15 16 17.5 12.5 16.5C9.5 15.5 9 12.5 11.5 11.8C13.5 11.2 15 12.5 14.5 14"/><path d="M19.8 19.5C16 21 9 21 6.5 17C4 13 7.5 9 12 9C16 9 17.5 12 16.5 14.5"/></g>
</svg>


<!-- editor extras -->
<div class="ui hint" style="left:557px;top:54px">2 usages</div>
<svg class="a" style="left:621px;top:57px" width="9" height="9" viewBox="0 0 9 9" fill="#7A7E85"><circle cx="4.5" cy="2.3" r="2.2"/><path d="M0.3 8.5Q0.6 5.3 4.5 5.3T8.7 8.5Z"/></svg>
<div class="ui hint" style="left:633px;top:54px">porplax *</div>
<div class="ui hint" style="left:661px;top:96px">1 usage</div>
<svg class="a" style="left:718px;top:99px" width="9" height="9" viewBox="0 0 9 9" fill="#7A7E85"><circle cx="4.5" cy="2.3" r="2.2"/><path d="M0.3 8.5Q0.6 5.3 4.5 5.3T8.7 8.5Z"/></svg>
<div class="ui hint" style="left:730px;top:96px">porplax *</div>
<svg class="a" style="left:1735px;top:18px" width="20" height="22" viewBox="0 0 20 22" fill="#CED0D6"><circle cx="10" cy="5.5" r="1.2"/><circle cx="10" cy="11" r="1.2"/><circle cx="10" cy="16.5" r="1.2"/></svg>
<div class="a" style="left:1738px;top:72px;width:23px;height:1px;background:#1E1F22"></div>
<svg class="a" style="left:1743px;top:57px" width="14" height="12" viewBox="0 0 14 12"><path d="M2 6.5l3 3 7-7" fill="none" stroke="#5FB865" stroke-width="1.6"/></svg>
<div class="a" style="left:1755px;top:316px;width:8px;height:139px;background:rgba(120,122,128,0.32)"></div>
<div class="a" style="left:449px;top:679px;width:643px;height:8px;background:rgba(110,110,114,0.47)"></div>
<div class="a" style="left:1746px;top:391px;width:2px;height:5px;background:#3D6DC0"></div>
<svg class="a" style="left:961px;top:747px" width="14" height="20" viewBox="0 0 14 20"><path d="M1 1v15.2l3.7-3.6 2.7 5.9 2.4-1.1-2.6-5.7H12.5z" fill="#DDDFE1" stroke="#0A0A0A" stroke-width="1"/></svg>

<!-- terminal header items -->
<div class="ui" style="left:47px;top:702px;font-weight:bold">Terminal</div>
<div class="ui" style="left:127px;top:702px;letter-spacing:0.7px">Local</div>
<div class="ui" style="left:202px;top:702px;letter-spacing:0.2px">Local (2)</div>
<div class="ui" style="left:299px;top:702px;letter-spacing:0.2px">Local (3)</div>
<svg class="a" style="left:0;top:690px" width="440" height="40" viewBox="0 0 440 40" fill="none" stroke="#868A91" stroke-width="1.1" stroke-linecap="round">
  <path d="M171.8 17l7 7M178.8 17l-7 7M268.6 17l7 7M275.6 17l-7 7M365.5 17l7 7M372.5 17l-7 7"/>
  <path d="M396.5 13.5v12.5M390.3 19.7h12.4" stroke="#CED0D6" stroke-width="1.3"/>
  <path d="M418 17.5l5 5 5-5" stroke="#CED0D6" stroke-width="1.2"/>
</svg>
<svg class="a" style="left:1700px;top:690px" width="60" height="40" viewBox="0 0 60 40" fill="#CED0D6">
  <circle cx="17" cy="15" r="1.2"/><circle cx="17" cy="20" r="1.2"/><circle cx="17" cy="25" r="1.2"/>
  <rect x="37" y="18.8" width="12" height="1.4"/>
</svg>
<div class="a" style="left:1755px;top:943px;width:8px;height:72px;background:#4A4A4D"></div>
<div class="a" style="left:38px;top:996px;width:8px;height:19px;background:#BCBEC4"></div>

</body></html>
